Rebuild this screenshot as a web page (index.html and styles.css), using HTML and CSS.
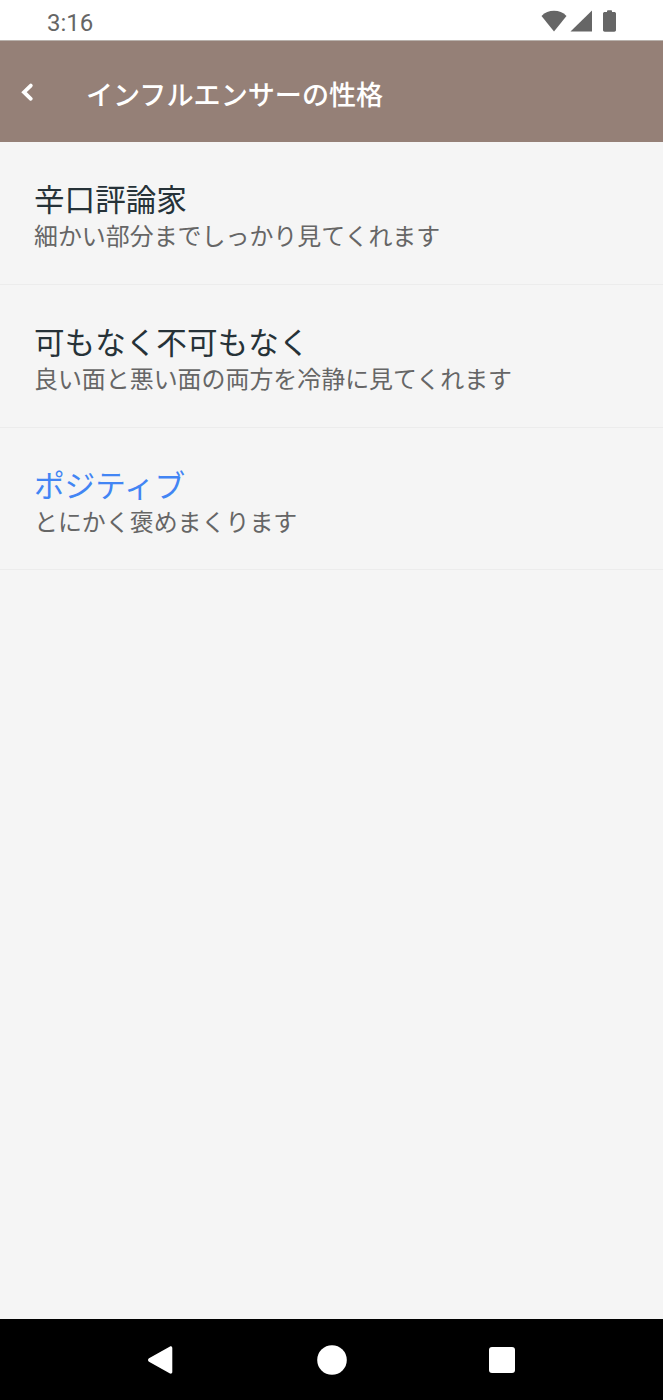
FILE: index.html
```html
<!DOCTYPE html>
<html lang="ja">
<head>
<meta charset="utf-8">
<title>インフルエンサーの性格</title>
<link rel="stylesheet" href="styles.css">
</head>
<body>
<div class="screen">
  <div class="status">
    <span class="time">3:16</span>
    <div class="status-icons">
      <svg class="wifi" width="26" height="22" viewBox="0 0 26 22"><path d="M0.500 6C4 2.400 8.200 0.800 13 0.800s9 1.600 12.500 5.200L13 21.500z" fill="#666"/></svg>
      <svg class="signal" width="22" height="22" viewBox="0 0 22 22"><path d="M22 0.500V21.500H0.500z" fill="#666"/></svg>
      <svg class="battery" width="13" height="22" viewBox="0 0 13 22"><path d="M4 2V1.200C4 .7 4.400.3 5 .3h3c.6 0 1 .4 1 .9V2h2.300C12.200 2 13 2.700 13 3.600V20c0 1-.8 1.700-1.700 1.700H1.700C.8 21.700 0 21 0 20V3.600C0 2.700.8 2 1.700 2z" fill="#666"/></svg>
    </div>
  </div>
  <header class="appbar">
    <svg class="back" width="14" height="20" viewBox="0 0 14 20"><path d="M10.800 3.600L4 10.200l6.800 6.600" fill="none" stroke="#fff" stroke-width="3.800" stroke-linecap="round"/></svg>
    <h1 class="title">インフルエンサーの性格</h1>
  </header>
  <main class="list">
    <div class="row">
      <div class="row-title">辛口評論家</div>
      <div class="row-sub">細かい部分までしっかり見てくれます</div>
    </div>
    <div class="row">
      <div class="row-title">可もなく不可もなく</div>
      <div class="row-sub">良い面と悪い面の両方を冷静に見てくれます</div>
    </div>
    <div class="row">
      <div class="row-title selected">ポジティブ</div>
      <div class="row-sub">とにかく褒めまくります</div>
    </div>
  </main>
  <nav class="navbar">
    <svg width="26" height="30" viewBox="0 0 26 30"><path d="M23 1.500L2 13.300c-1.300.8-1.300 2.600 0 3.400L23 28.500c1 .5 2.300-.2 2.300-1.400V2.900c0-1.200-1.300-1.900-2.300-1.400z" fill="#fff"/></svg>
    <svg width="30" height="30" viewBox="0 0 30 30"><circle cx="15" cy="15" r="14.800" fill="#fff"/></svg>
    <svg width="26" height="26" viewBox="0 0 26 26"><rect width="26" height="26" rx="3" fill="#fff"/></svg>
  </nav>
</div>
</body>
</html>
```

FILE: styles.css
```css
* { box-sizing: border-box; margin: 0; padding: 0; }
html, body { width: 663px; height: 1400px; overflow: hidden; }
body { font-family: Roboto, "Noto Sans CJK JP", sans-serif; background: #f5f5f5; }
.screen { display: flex; flex-direction: column; height: 1400px; }
.status { flex: 0 0 41px; display: flex; align-items: center; justify-content: space-between; padding: 7px 47px 2px 47px; background: #fff; border-bottom: 1px solid #b9b2ad; }
.time { font-size: 24px; line-height: 30px; color: #666; }
.status-icons { display: flex; align-items: center; gap: 3px; margin-top: -3px; }
.battery { margin-left: 8px; }
.appbar { flex: 0 0 101px; display: flex; align-items: center; background: #958077; padding-left: 20px; }
.back { flex: none; }
.title { margin: 8px 0 0 52px; font-size: 27.100px; font-weight: 500; color: #fff; line-height: 40px; font-family: Roboto, "Noto Sans CJK JP", sans-serif; }
.list { flex: 1; }
.row { height: 142.8px; padding: 39px 34px 0; border-bottom: 1px solid #ececec; }
.row-title { font-size: 30.600px; line-height: 40px; color: #263238; }
.selected { color: #4285f4; }
.row-sub { font-size: 23.950px; line-height: 33px; color: #666; }
.navbar { flex: 0 0 81px; background: #000; display: flex; align-items: center; padding-left: 147px; gap: 0; }
.navbar svg:nth-child(2) { margin-left: 144px; }
.navbar svg:nth-child(3) { margin-left: 142px; }
```
